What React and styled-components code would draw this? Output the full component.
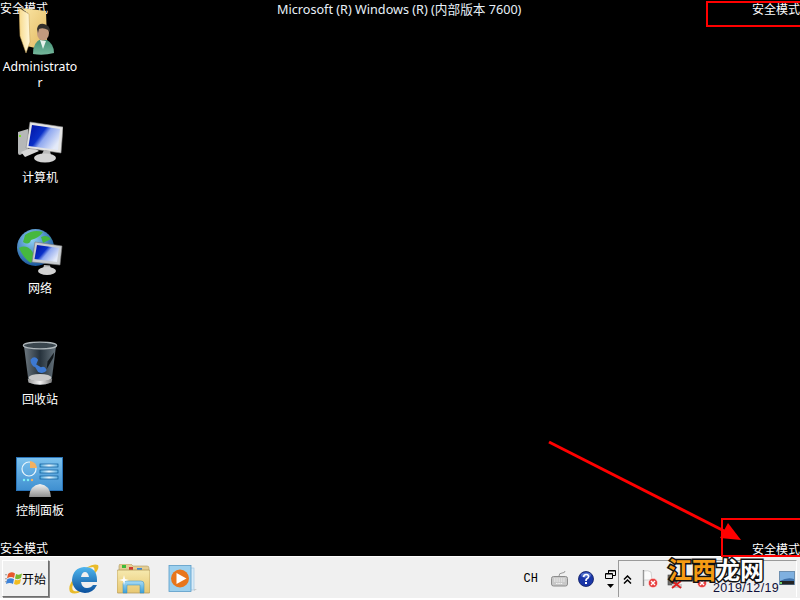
import React from "react";
import styled, { createGlobalStyle } from "styled-components";

const Global = createGlobalStyle`
  html, body { margin: 0; padding: 0; background: #000; }
  #root { width: 800px; height: 600px; overflow: hidden; }
`;
const Screen = styled.div`
  position: relative; width: 800px; height: 600px; background: #000; overflow: hidden;
  display: flex; flex-direction: column;
  font-family: "Noto Sans", "Noto Sans CJK SC", sans-serif;
`;
const Desktop = styled.main`
  position: relative; z-index: 1;
  flex: 1; min-height: 0; display: flex; flex-direction: column; align-items: flex-start; padding-top: 4px;
`;
const Shortcut = styled.div`
  flex: none; width: 80px; height: ${p => p.$h}px; display: flex; flex-direction: column; align-items: center; color: #fff;
`;
const IconSlot = styled.div`
  height: 52px; display: flex; align-items: flex-end; justify-content: center; margin-bottom: 4px;
`;
const Label = styled.div`
  width: 76px; text-align: center; font-size: ${p => (p.$latin ? 12.25 : 12)}px; line-height: 16px; word-break: break-all; color: #fff;
  margin-top: ${p => (p.$latin ? -1 : 1)}px;
`;
const Watermark = styled.div`
  position: absolute; color: #fff; font-size: 12px; line-height: 14px; white-space: nowrap;
  left: ${p => p.$x}px; top: ${p => p.$y}px;
`;
const BuildTag = styled.div`
  position: absolute; left: 277px; top: 1px; color: #e8f0f8; font-size: 12.65px; line-height: 16px; white-space: nowrap;
`;
const RedBox = styled.div`
  position: absolute; left: ${p => p.$x}px; top: ${p => p.$y}px; width: ${p => p.$w}px; height: ${p => p.$h}px;
  border: 2px solid #f00; border-right: none; box-sizing: border-box;
`;
const ArrowLayer = styled.svg`
  position: absolute; left: 540px; top: 435px;
`;
const Taskbar = styled.footer`
  height: 44px; box-sizing: border-box; background: #f0f0f0; border-top: 1px solid #fff; border-bottom: 2px solid #fff;
  display: flex; align-items: center; padding: 2px 3px 0 2px;
`;
const StartButton = styled.button`
  width: 47px; height: 37px; padding: 0 0 0 2px; box-sizing: border-box; background: #f0f0f0; display: flex; align-items: center; gap: 0;
  border: 1px solid; border-color: #fff #6e6e6e #6e6e6e #fff; box-shadow: 1px 1px 0 #8a8a8a;
  font: 12px "Noto Sans CJK SC", sans-serif; color: #000;
`;
const QuickLaunch = styled.div`
  display: flex; align-items: center; gap: 18px; margin-left: 20px;
`;
const Spacer = styled.div` flex: 1; `;
const Lang = styled.span`
  font: 12px "Liberation Mono", monospace; color: #000; margin-right: 13px;
`;
const LangBar = styled.div`
  display: flex; align-items: center; gap: 10px;
`;
const MiniControls = styled.div`
  display: flex; flex-direction: column; align-items: center; gap: 5px; width: 12px;
`;
const Tray = styled.div`
  width: 179px; height: 37px; box-sizing: border-box; margin-left: 2px; border-left: 1px solid #9a9a9a; border-top: 1px solid #9a9a9a; border-right: 1px solid #fff;
  position: relative; display: flex; align-items: center; padding: 0 1px 0 4px; gap: 8px;
`;
const Clock = styled.span`
  position: absolute; left: 94px; top: 21px; font: 12.5px/12px "Liberation Sans", sans-serif; letter-spacing: 0.35px; color: #10103a;
`;
const PushRight = styled.div` margin-left: auto; display: flex; `;
const ChevronWrap = styled.div` display: flex; margin-right: 2px; `;
const SiteMark = styled.div`
  position: absolute; left: 668px; top: 557px; font: 700 24px/24px "Noto Sans CJK SC", sans-serif; white-space: nowrap;
  -webkit-text-stroke: 3px #111; paint-order: stroke fill;
`;
const Orange = styled.span` color: #f59b14; `;
const White = styled.span` color: #fff; `;

const Folder = () => (
  <svg width="42" height="48" viewBox="0 0 42 48">
    <defs>
      <linearGradient id="fa" x1="0" y1="0" x2="1" y2="1"><stop offset="0" stopColor="#fbe7a6"/><stop offset="1" stopColor="#e2b860"/></linearGradient>
      <linearGradient id="fb" x1="0" y1="0" x2="1" y2="0"><stop offset="0" stopColor="#f7d98a"/><stop offset="1" stopColor="#fff8dc"/></linearGradient>
      <linearGradient id="fp" x1="0" y1="0" x2="0" y2="1"><stop offset="0" stopColor="#3f8f72"/><stop offset="1" stopColor="#76b79c"/></linearGradient>
    </defs>
    <path d="M2 0 L27 3 L28 33 L20 41 L8 38 L10 6Z" fill="url(#fa)"/>
    <path d="M0 0 L10 6 L11 34 L7 45 L1 28Z" fill="url(#fb)" stroke="#c09a50" strokeWidth=".5"/>
    <path d="M14 46 Q14 34 22 31 L28 32 Q35 36 35 45 Q24 48 14 46Z" fill="url(#fp)"/>
    <path d="M21 32 L24 41 L27 33Z" fill="#e8f2ec"/>
    <ellipse cx="24" cy="25" rx="6" ry="7.5" fill="#c29a7e"/>
    <path d="M18 21 Q19 15 25 16 Q31 17 31 24 L29 22 Q24 19 20 21 L19 25Z" fill="#33302c"/>
  </svg>
);
const Computer = () => (
  <svg width="46" height="44" viewBox="0 0 46 44">
    <defs>
      <linearGradient id="cs" x1="0" y1="0" x2="1" y2="0.6"><stop offset="0" stopColor="#0010a0"/><stop offset=".45" stopColor="#0a30c8"/><stop offset=".6" stopColor="#8fa8f0"/><stop offset="1" stopColor="#e4eaf8"/></linearGradient>
    </defs>
    <path d="M1 11 L11 8 L11 30 L3 34 Q1 34 1 32Z" fill="#b6b8b8"/>
    <path d="M4 31 L16 26 L22 30 L8 36Z" fill="#d8d8d8"/>
    <rect x="2" y="14" width="2" height="2" fill="#7be02a"/>
    <path d="M13 1 L46 6 L44 32 L9 27Z" fill="#e4e4e4" stroke="#888" strokeWidth=".6"/>
    <path d="M15 4 L43 8 L41 29 L11.5 25Z" fill="url(#cs)"/>
    <path d="M27 29 L33 30 L34 34 L25 33Z" fill="#bbb"/>
    <ellipse cx="28" cy="37" rx="11" ry="4.5" fill="#d4d4d4"/>
  </svg>
);
const Network = () => (
  <svg width="46" height="47" viewBox="0 0 46 47">
    <defs>
      <radialGradient id="gl" cx=".4" cy=".3" r=".8"><stop offset="0" stopColor="#8fd0f5"/><stop offset="1" stopColor="#0a4590"/></radialGradient>
      <linearGradient id="ns" x1="0" y1="0" x2="1" y2="0.6"><stop offset="0" stopColor="#0010a0"/><stop offset=".45" stopColor="#0a30c8"/><stop offset=".6" stopColor="#8fa8f0"/><stop offset="1" stopColor="#e4eaf8"/></linearGradient>
    </defs>
    <circle cx="18.5" cy="18.5" r="18.5" fill="url(#gl)"/>
    <path d="M8 6 Q16 0 26 3 Q22 9 14 11 Q12 17 6 13Z M2 19 Q9 15 15 22 Q19 29 14 34 Q7 30 2 19Z M24 8 Q30 5 34 10 L26 14Z" fill="#46b83f"/>
    <path d="M18 13 L45 17 L43 36 L15 33Z" fill="#c8ccd0" stroke="#777" strokeWidth=".6"/>
    <path d="M20 16 L42 19 L40 33 L17.5 30Z" fill="url(#ns)"/>
    <path d="M27 36 L33 36.5 L34 40 L26 40Z" fill="#bbb"/>
    <ellipse cx="30" cy="42" rx="9" ry="4" fill="#d2d2d2"/>
  </svg>
);
const Bin = () => (
  <svg width="36" height="47" viewBox="0 0 38 48">
    <defs>
      <linearGradient id="bb" x1="0" y1="0" x2="1" y2="0"><stop offset="0" stopColor="#6d7880"/><stop offset=".5" stopColor="#26323c"/><stop offset="1" stopColor="#68757e"/></linearGradient>
      <linearGradient id="bf" x1="0" y1="0" x2="1" y2="0"><stop offset="0" stopColor="#999"/><stop offset=".5" stopColor="#f2f2f2"/><stop offset="1" stopColor="#777"/></linearGradient>
    </defs>
    <path d="M2 5 L36 5 L31 44 Q19 49 7 44Z" fill="url(#bb)"/>
    <ellipse cx="19" cy="5" rx="17.5" ry="3.5" fill="#3a464e" stroke="#aeb6ba" strokeWidth="1.4"/>
    <path d="M27 22 L34 12 L33 18 L26 30Z" fill="#12181c"/>
    <path d="M9 20 Q13 15 17 20 L15 25 L20 28 Q24 26 26 31 Q23 36 17 33 L14 28 Q9 26 9 20Z" fill="#3d79d2"/>
    <ellipse cx="19" cy="39" rx="12" ry="4" fill="#c8c8c8"/>
    <path d="M6 40 Q19 45 32 40 L31 44 Q19 49 7 44Z" fill="url(#bf)"/>
  </svg>
);
const Control = () => (
  <svg width="48" height="41" viewBox="0 0 48 41">
    <defs>
      <linearGradient id="cp" x1="0" y1="0" x2="0" y2="1"><stop offset="0" stopColor="#7cc2ee"/><stop offset="1" stopColor="#3f8fd0"/></linearGradient>
      <linearGradient id="cd" x1="0" y1="0" x2="0" y2="1"><stop offset="0" stopColor="#f4f4f4"/><stop offset="1" stopColor="#8e8e8e"/></linearGradient>
      <linearGradient id="cb" x1="0" y1="0" x2="1" y2="0"><stop offset="0" stopColor="#4aa8e0"/><stop offset=".5" stopColor="#e8f6fd"/><stop offset="1" stopColor="#5ab0e4"/></linearGradient>
    </defs>
    <rect x=".5" y=".5" width="46" height="33" fill="url(#cp)" stroke="#2a74b8" strokeWidth="1"/>
    <circle cx="13" cy="12" r="7" fill="none" stroke="#e8f4fb" strokeWidth="1.2"/>
    <path d="M14 4 A7.5 7.5 0 0 1 21 11 L14 11Z" fill="#f2b162"/>
    <rect x="24" y="7" width="18" height="3" fill="url(#cb)" stroke="#0d5a96" strokeWidth=".7"/>
    <rect x="24" y="13" width="18" height="3" fill="url(#cb)" stroke="#0d5a96" strokeWidth=".7"/>
    <rect x="24" y="19" width="18" height="3" fill="url(#cb)" stroke="#0d5a96" strokeWidth=".7"/>
    <circle cx="8" cy="23" r="1.2" fill="#7ef0f5"/><circle cx="12" cy="23" r="1.2" fill="#7ef0f5"/><circle cx="16" cy="23" r="1.2" fill="#f2b162"/>
    <path d="M13 40 Q14 28 24 27 Q34 28 35 40Z" fill="url(#cd)"/>
  </svg>
);
const IE = () => (
  <svg width="30" height="32" viewBox="0 0 30 32">
    <defs><linearGradient id="ie" x1="0" y1="0" x2="0" y2="1"><stop offset="0" stopColor="#4fb6ee"/><stop offset="1" stopColor="#0a4f9c"/></linearGradient></defs>
    <path d="M1 29 Q-2 22 8 12 Q22 -1 29 2 Q31 6 24 12 Q27 5 24 4 Q14 4 6 17 Q1 26 5 28 Q9 29 14 27 Q6 33 1 29Z" fill="#e9bb2a"/>
    <path fillRule="evenodd" d="M15 4 Q28 4 28 17 L28 19 L12 19 Q13 25 18 25 Q22 25 24 22 L28 22 Q24 30 16 30 Q4 29 3 17 Q4 5 15 4Z M12 14 L20 14 Q19 9 16 9 Q13 9 12 14Z" fill="url(#ie)"/>
  </svg>
);
const Explorer = () => (
  <svg width="33" height="30" viewBox="0 0 33 30">
    <defs>
      <linearGradient id="ex" x1="0" y1="0" x2="0" y2="1"><stop offset="0" stopColor="#f6e9ae"/><stop offset="1" stopColor="#e8c872"/></linearGradient>
      <linearGradient id="ew" x1="0" y1="0" x2="0" y2="1"><stop offset="0" stopColor="#a9dcf5"/><stop offset="1" stopColor="#3c9fd6"/></linearGradient>
    </defs>
    <path d="M2 5 L2 2 Q2 0 4 0 L14 0 L16 2 L30 2 Q32 2 32 4 L32 8 L2 8Z" fill="#e3cd94" stroke="#b0985c" strokeWidth=".6"/>
    <rect x="5" y="1" width="4" height="3" fill="#3dbb3a"/><rect x="12" y="3" width="4" height="3" fill="#d03a30"/><rect x="20" y="4" width="5" height="3" fill="#3a86d8"/>
    <rect x="0" y="6" width="33" height="23" rx="1" fill="url(#ex)" stroke="#b49a5c" strokeWidth=".8"/>
    <path d="M6 29 L6 20 Q6 17 9 17 L24 17 Q27 17 27 20 L27 29 L23 29 L23 21 L10 21 L10 29Z" fill="url(#ew)" stroke="#3a8cc0" strokeWidth=".5"/>
    <path d="M7 11 L8 15 L12 16 L8 17 L7 21 L6 17 L2 16 L6 15Z" fill="#fff"/>
  </svg>
);
const Media = () => (
  <svg width="30" height="28" viewBox="0 0 30 28">
    <rect x="20" y="3" width="6" height="22" fill="#d8ecf8" stroke="#9cc4e0" strokeWidth=".6"/>
    <rect x="1" y="0.5" width="22" height="26" fill="#9cd0ee" stroke="#5a9cc8" strokeWidth=".8"/>
    <path d="M26 24 L29 24 L26 26Z" fill="#c8c8c8"/>
    <circle cx="12" cy="13.5" r="9" fill="#e8761c"/>
    <path d="M8.5 8 L18.5 13.5 L8.5 19Z" fill="#fff"/>
  </svg>
);
const Keyboard = () => (
  <svg width="17" height="16" viewBox="0 0 17 16">
    <path d="M8 5 Q8 2 11 2 Q14 2 14 0" fill="none" stroke="#999" strokeWidth="1"/>
    <rect x=".5" y="5.5" width="16" height="9.5" rx="2" fill="#c8c8c8" stroke="#8c8c8c"/>
    <path d="M3 8 H14 M3 10 H14 M5 12.5 H12" stroke="#f4f4f4" strokeWidth="1" strokeDasharray="1.5 .8"/>
  </svg>
);
const Help = () => (
  <svg width="16" height="16" viewBox="0 0 16 16">
    <circle cx="8" cy="8" r="7.5" fill="#1a36a8" stroke="#0c1c60" strokeWidth=".8"/>
    <ellipse cx="8" cy="4" rx="5" ry="2.6" fill="#6a88d8" opacity=".7"/>
    <path d="M5.5 6 Q6 3.4 8.3 3.5 Q11 3.8 10.5 6 Q10 7.4 8.6 8 Q8 8.5 8 10" fill="none" stroke="#fff" strokeWidth="1.7"/>
    <rect x="7" y="11" width="2" height="2" fill="#fff"/>
  </svg>
);
const Restore = () => (
  <svg width="11" height="9" viewBox="0 0 11 9">
    <path d="M3.5 .5 H10.5 V5.5 H8 M.5 3.5 H7.5 V8.5 H.5Z M3.5 .5 V3.5" fill="none" stroke="#000"/>
    <path d="M3 1 H10.5 M1 4 H7.5" stroke="#000"/>
  </svg>
);
const Down = () => (
  <svg width="7" height="4" viewBox="0 0 7 4"><path d="M0 0 H7 L3.5 4Z" fill="#000"/></svg>
);
const Chevrons = () => (
  <svg width="9" height="9" viewBox="0 0 9 9" fill="none" stroke="#000" strokeWidth="1.5"><path d="M1 4.5 L4.5 1 L8 4.5 M1 8.5 L4.5 5 L8 8.5"/></svg>
);
const ActionFlag = () => (
  <svg width="17" height="19" viewBox="0 0 17 19">
    <path d="M1.5 0 V16" stroke="#8a8a8a" strokeWidth="1.4"/>
    <path d="M2 1 Q6 0 9 2 L10 10 L2 10Z" fill="#fbfbfb" stroke="#bbb" strokeWidth=".6"/>
    <circle cx="11" cy="13" r="4.7" fill="#e84040" stroke="#fff" strokeWidth=".6"/>
    <path d="M9 11 L13 15 M13 11 L9 15" stroke="#fff" strokeWidth="1.4"/>
  </svg>
);
const DisabledDevice = () => (
  <svg width="17" height="19" viewBox="0 0 17 19">
    <rect x="1" y="5" width="9" height="10" fill="#6e6e6e" stroke="#444" strokeWidth=".6"/>
    <path d="M5 14 L15 14 L15 18 L5 18Z" fill="#c8c8c8"/>
    <path d="M5 11 L14 18 M14 11 L5 18" stroke="#e02020" strokeWidth="1.8"/>
  </svg>
);
const DisabledSpeaker = () => (
  <svg width="17" height="19" viewBox="0 0 17 19">
    <path d="M0 6 L5 3 L8 8 L3 11Z" fill="#c8c8c8" stroke="#888" strokeWidth=".5"/>
    <circle cx="10" cy="13" r="4.7" fill="#e84040" stroke="#fff" strokeWidth=".6"/>
    <path d="M8 11 L12 15 M12 11 L8 15" stroke="#fff" strokeWidth="1.4"/>
  </svg>
);
const Tile = () => (
  <svg width="16" height="16" viewBox="0 0 16 16">
    <rect x=".5" y=".5" width="15" height="13" fill="#3d6fa8" stroke="#6d8fb0"/>
    <path d="M1 1 H15 V8 Q8 6 1 10Z" fill="#7fb0e0"/>
    <rect x="1" y="10" width="14" height="3.5" fill="#222"/>
    <rect x="1" y="11" width="2" height="2" fill="#6fd06a"/>
  </svg>
);
const StartLogo = () => (
  <svg width="17" height="15" viewBox="0 0 17 15">
    <path d="M0 4 Q1 3 2 4 M0 8 Q1 7 2 8 M0 11 Q1 10 2 11" stroke="#9a9a9a" strokeWidth="1" fill="none"/>
    <path d="M3 3 Q6 0 10 2.5 L9 7 Q6 5 2 7.5Z" fill="#e8582c"/>
    <path d="M11 3 Q14 4.5 17 2.5 L16 7 Q13 9 10 7.5Z" fill="#7cb82e"/>
    <path d="M2 8.5 Q5 6.5 9 8 L8 13 Q5 11 1 13Z" fill="#3c82d8"/>
    <path d="M10 8.5 Q13 10 16 8 L15 12.5 Q12 14.5 9 13Z" fill="#f2bc20"/>
  </svg>
);

const items = [
  [Folder, "Administrator", 109, true],
  [Computer, "计算机", 111, false],
  [Network, "网络", 111, false],
  [Bin, "回收站", 111, false],
  [Control, "控制面板", 111, false],
];

export default function App() {
  return (
    <Screen>
      <Global />
      <Desktop>
        {items.map(([Icon, name, h, latin]) => (
          <Shortcut key={name} $h={h}>
            <IconSlot><Icon /></IconSlot>
            <Label $latin={latin}>{name}</Label>
          </Shortcut>
        ))}
      </Desktop>
      <Taskbar>
        <StartButton><StartLogo />开始</StartButton>
        <QuickLaunch><IE /><Explorer /><Media /></QuickLaunch>
        <Spacer />
        <Lang>CH</Lang>
        <LangBar>
          <Keyboard />
          <Help />
          <MiniControls><Restore /><Down /></MiniControls>
        </LangBar>
        <Tray>
          <ChevronWrap><Chevrons /></ChevronWrap>
          <ActionFlag />
          <DisabledDevice />
          <DisabledSpeaker />
          <Clock>2019/12/19</Clock>
          <PushRight><Tile /></PushRight>
        </Tray>
      </Taskbar>
      <Watermark $x={0} $y={2}>安全模式</Watermark>
      <Watermark $x={752} $y={3}>安全模式</Watermark>
      <Watermark $x={0} $y={542}>安全模式</Watermark>
      <Watermark $x={752} $y={543}>安全模式</Watermark>
      <BuildTag>Microsoft (R) Windows (R) (内部版本 7600)</BuildTag>
      <RedBox $x={706} $y={1} $w={94} $h={26} />
      <RedBox $x={721} $y={518} $w={79} $h={39} />
      <ArrowLayer width="210" height="115" viewBox="0 0 210 115">
        <path d="M9 7 L196 102" stroke="#f00" strokeWidth="3" fill="none"/>
        <path d="M201 105 L180 103 L188 88Z" fill="#f00"/>
      </ArrowLayer>
      <SiteMark><Orange>江西</Orange><White>龙网</White></SiteMark>
    </Screen>
  );
}
